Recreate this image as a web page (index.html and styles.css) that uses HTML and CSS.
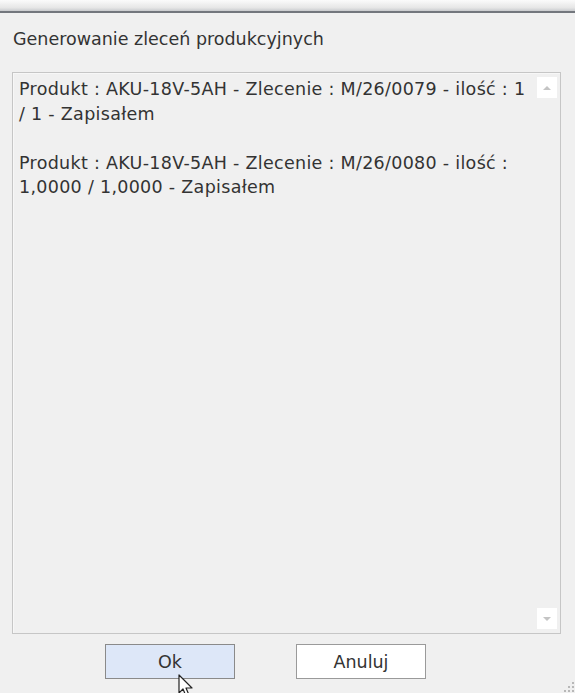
FILE: index.html
```html
<!DOCTYPE html>
<html lang="pl">
<head>
<meta charset="utf-8">
<title>Generowanie zleceń produkcyjnych</title>
<link rel="stylesheet" href="styles.css">
</head>
<body>
<div class="topbar"></div>
<main class="dialog">
  <h1 class="title">Generowanie zleceń produkcyjnych</h1>
  <div class="log">
    <div class="log-text">
      <p>Produkt : AKU-18V-5AH - Zlecenie : M/26/0079 - ilość : 1 / 1 - Zapisałem</p>
      <p>Produkt : AKU-18V-5AH - Zlecenie : M/26/0080 - ilość : 1,0000 / 1,0000 - Zapisałem</p>
    </div>
    <div class="scroll">
      <span class="scroll-btn"><span class="tri up"></span></span>
      <span class="scroll-btn"><span class="tri down"></span></span>
    </div>
  </div>
  <div class="buttons">
    <button class="btn btn-ok">Ok</button>
    <button class="btn">Anuluj</button>
  </div>
</main>
<svg class="cursor" width="20" height="24" viewBox="0 0 20 24"><path d="M1 1 L1 19 L5 15 L8 22 L11 21 L8 14 L14 14 Z" fill="#fff" stroke="#222" stroke-width="1.2" stroke-linejoin="round"/></svg>
<svg class="grip" width="12" height="12" viewBox="0 0 12 12"><g fill="#b8b8b8"><rect x="9" y="1" width="2" height="2"/><rect x="9" y="5" width="2" height="2"/><rect x="5" y="5" width="2" height="2"/><rect x="9" y="9" width="2" height="2"/><rect x="5" y="9" width="2" height="2"/><rect x="1" y="9" width="2" height="2"/></g></svg>
</body>
</html>
```
FILE: styles.css
```css
html, body {
  margin: 0;
  padding: 0;
}
body {
  width: 575px;
  height: 693px;
  overflow: hidden;
  background: #f0f0f0;
  font-family: "DejaVu Sans", sans-serif;
  color: #333;
  position: relative;
}
.topbar {
  height: 11px;
  background: linear-gradient(#fbfbfb, #e6e6e6 70%, #c9cbce);
  border-bottom: 2px solid #73777d;
}
.dialog {
  padding: 16px 14px 0 12px;
}
.title {
  margin: 0 0 23px 1px;
  font-size: 17.5px;
  font-weight: normal;
  line-height: 20px;
  color: #333;
}
.log {
  height: 560px;
  border: 1px solid #c6c6c6;
  box-shadow: inset 1px 1px 0 #f7f7f7;
  background: #f0f0f0;
  display: flex;
}
.log-text {
  flex: 1;
  padding: 4px 6px 0 6px;
  font-size: 17.5px;
  letter-spacing: 0.3px;
  line-height: 24.5px;
}
.log-text p {
  margin: 0 0 24.5px;
}
.scroll {
  width: 20px;
  margin-right: 3px;
  padding: 4px 0 4px;
  display: flex;
  flex-direction: column;
  justify-content: space-between;
}
.scroll-btn {
  height: 21px;
  background: #fff;
  display: flex;
  align-items: center;
  justify-content: center;
}
.tri {
  width: 0;
  height: 0;
  border-left: 4px solid transparent;
  border-right: 4px solid transparent;
}
.tri.up { border-bottom: 4px solid #c4c4c4; }
.tri.down { border-top: 4px solid #c4c4c4; }
.buttons {
  display: flex;
  gap: 61px;
  margin: 10px 0 0 93px;
}
.btn {
  width: 130px;
  height: 35px;
  border: 1px solid #9a9a9a;
  background: #fff;
  font-family: "DejaVu Sans", sans-serif;
  font-size: 17.5px;
  color: #333;
  padding: 0;
}
.btn-ok {
  background: #dde7f8;
  border-color: #8a8a8a;
}
.cursor {
  position: absolute;
  left: 178px;
  top: 674px;
}
.grip {
  position: absolute;
  right: 0;
  bottom: 0;
}
```
